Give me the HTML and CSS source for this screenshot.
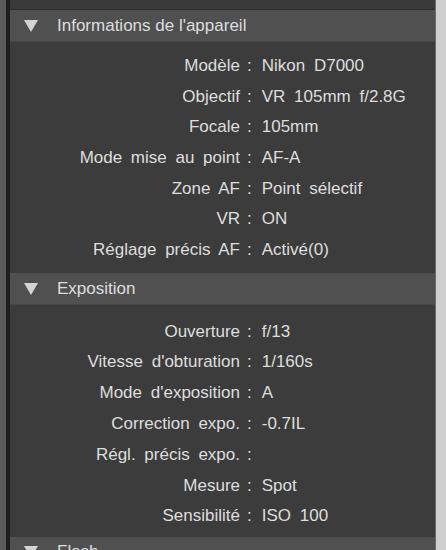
FILE: index.html
```html
<!DOCTYPE html>
<html>
	<head>
		<title>Informations</title>
		<link rel="stylesheet" href="styles.css">
	</head>
	<body>
		<div class="frame">
			<div class="edge"></div>
			<div class="panel">
				<div class="topstrip"></div>

				<div class="section">
					<div class="head"><span class="arrow"></span>Informations de l'appareil</div>
					<div class="rows">
						<div class="label">Modèle</div><div class="colon">:</div><div class="value">Nikon D7000</div>
						<div class="label">Objectif</div><div class="colon">:</div><div class="value">VR 105mm f/2.8G</div>
						<div class="label">Focale</div><div class="colon">:</div><div class="value">105mm</div>
						<div class="label">Mode mise au point</div><div class="colon">:</div><div class="value">AF-A</div>
						<div class="label">Zone AF</div><div class="colon">:</div><div class="value">Point sélectif</div>
						<div class="label">VR</div><div class="colon">:</div><div class="value">ON</div>
						<div class="label">Réglage précis AF</div><div class="colon">:</div><div class="value">Activé(0)</div>
					</div>
				</div>

				<div class="section">
					<div class="head"><span class="arrow"></span>Exposition</div>
					<div class="rows expo">
						<div class="label">Ouverture</div><div class="colon">:</div><div class="value">f/13</div>
						<div class="label">Vitesse d'obturation</div><div class="colon">:</div><div class="value">1/160s</div>
						<div class="label">Mode d'exposition</div><div class="colon">:</div><div class="value">A</div>
						<div class="label">Correction expo.</div><div class="colon">:</div><div class="value">-0.7IL</div>
						<div class="label">Régl. précis expo.</div><div class="colon">:</div><div class="value"></div>
						<div class="label">Mesure</div><div class="colon">:</div><div class="value">Spot</div>
						<div class="label">Sensibilité</div><div class="colon">:</div><div class="value">ISO 100</div>
					</div>
				</div>

				<div class="section">
					<div class="head"><span class="arrow"></span>Flash</div>
				</div>
			</div>
			<div class="scroll"></div>
		</div>
	</body>
</html>
```

FILE: styles.css
```css
body
{
	margin: 0;
	background-color: #3c3c3c;
	font-family: "Liberation Sans", Arial, sans-serif;
	font-size: 17px;
	color: #dedede;
	overflow: hidden;
}
.frame
{
	display: flex;
	height: 550px;
}
.edge
{
	width: 6px;
	background-color: #5a5a5a;
	border-right: 4px solid #1e1e1e;
}
.panel
{
	flex: 1;
	background-color: #3c3c3c;
	overflow: hidden;
}
.topstrip
{
	height: 9px;
	background-color: #3a3a3a;
	border-bottom: 1px solid #2f2f2f;
}
.head
{
	height: 31px;
	display: flex;
	align-items: center;
	background-color: #505050;
	border-bottom: 1px solid #464646;
}
.arrow
{
	width: 0;
	height: 0;
	margin-left: 14px;
	margin-right: 19px;
	border-left: 7px solid transparent;
	border-right: 7px solid transparent;
	border-top: 12px solid #d4d4d4;
}
.rows
{
	display: grid;
	grid-template-columns: 230px auto 1fr;
	grid-auto-rows: 30.6px;
	align-items: center;
	padding: 9px 0 8px 0;
	word-spacing: 4px;
}
.expo
{
	grid-auto-rows: 30.8px;
	padding: 11px 0 5px 0;
}
.label
{
	text-align: right;
}
.colon
{
	padding: 0 10px 0 7px;
}
.scroll
{
	width: 10px;
	background-color: #cfcfcf;
	border-left: 1px solid #6a6a6a;
}
```
